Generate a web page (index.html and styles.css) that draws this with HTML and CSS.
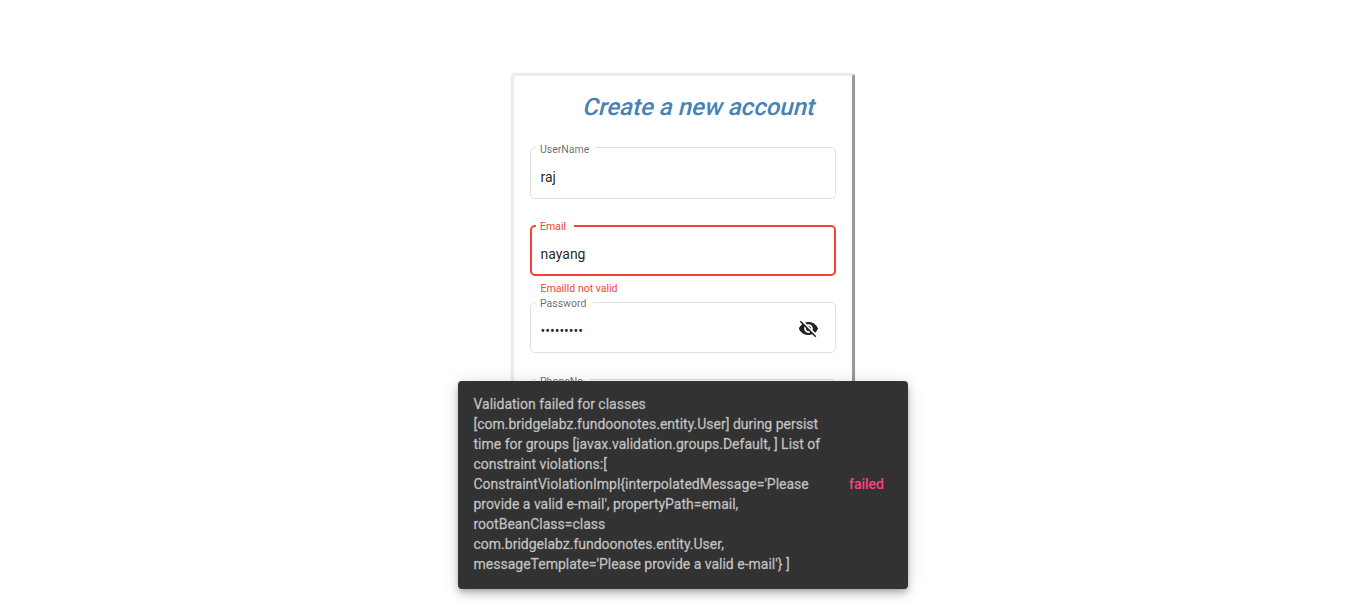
FILE: index.html
```html
<!DOCTYPE html>
<html lang="en">
<head>
<meta charset="utf-8">
<title>Create a new account</title>
<link rel="stylesheet" href="styles.css">
</head>
<body>
<main class="card">
  <h1 class="title">Create a new account</h1>
  <form class="form">
    <div class="field username">
      <span class="label"><span class="label-text">UserName</span></span>
      <span class="value">raj</span>
    </div>
    <div class="field invalid">
      <span class="label"><span class="label-text">Email</span></span>
      <span class="value">nayang</span>
      <span class="error">EmailId not valid</span>
    </div>
    <div class="field password">
      <span class="label"><span class="label-text">Password</span></span>
      <span class="value dots">•••••••••</span>
      <svg class="eye" viewBox="0 0 24 24"><path d="M12 7c2.76 0 5 2.24 5 5 0 .65-.13 1.26-.36 1.83l2.92 2.92c1.51-1.26 2.7-2.89 3.43-4.75-1.73-4.39-6-7.5-11-7.5-1.4 0-2.74.25-3.98.7l2.16 2.16C10.74 7.13 11.35 7 12 7zM2 4.27l2.28 2.28.46.46C3.08 8.3 1.78 10.02 1 12c1.73 4.39 6 7.5 11 7.5 1.55 0 3.03-.3 4.38-.84l.42.42L19.73 22 21 20.73 3.27 3 2 4.27zM7.53 9.8l1.55 1.55c-.05.21-.08.43-.08.65 0 1.66 1.34 3 3 3 .22 0 .44-.03.65-.08l1.55 1.55c-.67.33-1.41.53-2.2.53-2.76 0-5-2.24-5-5 0-.79.2-1.53.53-2.2zm4.31-.78l3.15 3.15.02-.16c0-1.66-1.34-3-3-3l-.17.01z"/></svg>
    </div>
    <div class="field phone">
      <span class="label"><span class="label-text">PhoneNo</span></span>
    </div>
  </form>
</main>
<div class="snackbar">
  <span class="message">Validation failed for classes [com.bridgelabz.fundoonotes.entity.User] during persist time for groups [javax.validation.groups.Default, ] List of constraint violations:[<br>ConstraintViolationImpl{interpolatedMessage='Please provide a valid e-mail', propertyPath=email, rootBeanClass=class com.bridgelabz.fundoonotes.entity.User, messageTemplate='Please provide a valid e-mail'} ]</span>
  <span class="action">failed</span>
</div>
</body>
</html>
```
FILE: styles.css
```css
* { box-sizing: border-box; }
body {
  margin: 0;
  height: 613px;
  overflow: hidden;
  background: #fff;
  font-family: Roboto, "Liberation Sans", sans-serif;
  font-size: 14px;
  color: rgba(0, 0, 0, .87);
}
.card {
  width: 344px;
  height: 500px;
  margin: 73px 0 0 511px;
  padding: 15px 16px;
  border: 3px solid #ededed;
  border-right-color: #9a9a9a;
  border-radius: 4px;
  box-shadow: 0 1px 1px rgba(0, 0, 0, .1), 0 0 1px rgba(0, 0, 0, .12);
}
.title {
  margin: 0 0 24px 54.3px;
  font-size: 24px;
  line-height: 32px;
  font-weight: 500;
  transform: skewX(-14deg);
  color: steelblue;
  white-space: nowrap;
}
.form {
  display: flex;
  flex-direction: column;
  gap: 26px;
}
.field {
  position: relative;
  display: flex;
  align-items: center;
  justify-content: space-between;
  height: 51px;
  padding: 1px 16px 0 9.5px;
  border: 1px solid #e0e0e0;
  border-radius: 5px;
}
.username {
  height: 52px;
  padding-top: 7px;
}
.label {
  position: absolute;
  top: -1px;
  left: 5px;
  height: 2px;
  padding: 0 6.5px 0 4px;
  display: flex;
  align-items: center;
  background: #fff;
  font-size: 10.5px;
  color: rgba(0, 0, 0, .6);
}
.label-text {
  position: relative;
  top: 1px;
}
.password .label-text { top: 0; }
.value { line-height: 16px; }
.invalid {
  border: 2px solid #f44336;
  padding: 6px 15px 0 8.5px;
}
.invalid .label {
  top: -2px;
  left: 4px;
  padding-right: 8px;
  color: #f44336;
}
.invalid .label-text { top: 0; }
.error {
  position: absolute;
  top: 55px;
  left: 8.5px;
  font-size: 10.5px;
  line-height: 14px;
  color: #f44336;
}
.dots { padding-top: 5px; font-size: 14px; }
.eye {
  width: 21px;
  height: 21px;
  fill: rgba(0, 0, 0, .87);
}
.snackbar {
  position: absolute;
  left: 458px;
  top: 381px;
  width: 450px;
  height: 208px;
  display: flex;
  align-items: center;
  justify-content: space-between;
  padding: 0 24px 2px 15.5px;
  border-radius: 4px;
  background: #323232;
  box-shadow: 0 3px 5px -1px rgba(0, 0, 0, .2), 0 6px 10px rgba(0, 0, 0, .14), 0 1px 18px rgba(0, 0, 0, .12);
  line-height: 20px;
}
.message {
  width: 351px;
  color: rgba(255, 255, 255, .66);
  -webkit-text-stroke: .4px rgba(255, 255, 255, .4);
}
.action {
  font-weight: 500;
  color: #ff4081;
}
```
